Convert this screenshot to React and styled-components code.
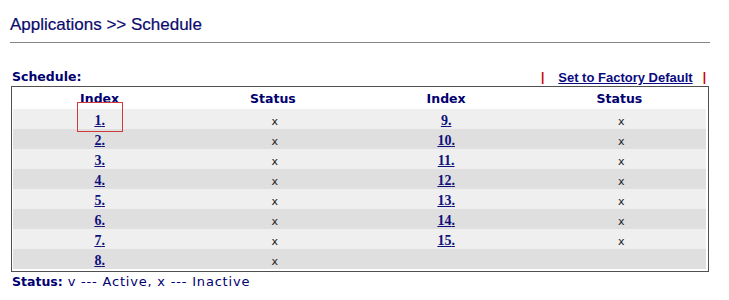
import React from "react";
import styled, { createGlobalStyle } from "styled-components";

const Global = createGlobalStyle`
  html, body { margin: 0; padding: 0; background: #ffffff; }
  body { font-family: "DejaVu Sans", Verdana, sans-serif; }
`;

const Page = styled.div`
  position: relative;
  width: 700px;
  padding: 0 0 0 10px;
`;

const Title = styled.div`
  font-family: "Liberation Sans", Arial, sans-serif;
  font-size: 17px;
  color: #0a0a6e;
  height: 42px;
  line-height: 50px;
  box-sizing: border-box;
  -webkit-text-stroke: 0.2px #0a0a6e;
`;

const Rule = styled.div`
  height: 0;
  border-top: 1px solid #858585;
`;

const Toolbar = styled.div`
  display: flex;
  justify-content: space-between;
  align-items: flex-end;
  margin-top: 24px;
  height: 19px;
  padding-left: 2px;
`;

const Label = styled.span`
  font-family: "DejaVu Sans", Verdana, sans-serif;
  font-weight: bold;
  font-size: 12.5px;
  color: #000070;
  line-height: 19px;
`;

const Actions = styled.div`
  display: flex;
  align-items: center;
  gap: 13px;
  line-height: 17px;
  padding-right: 4px;
`;

const Pipe = styled.span`
  color: #cc0000;
  font-family: "Liberation Sans", Arial, sans-serif;
  font-weight: bold;
  font-size: 12px;
`;

const ActionLink = styled.a`
  font-family: "Liberation Sans", Arial, sans-serif;
  font-weight: bold;
  font-size: 13px;
  color: #0a0a80;
  text-decoration: underline;
  cursor: pointer;
  margin-right: -3px;
  margin-left: 1px;
`;

const Frame = styled.div`
  margin-left: 1px;
  width: 698px;
  box-sizing: border-box;
  border: 1px solid #505050;
  padding: 1px 2px 2px 1px;
`;

const Table = styled.table`
  width: 100%;
  border-collapse: collapse;
  table-layout: fixed;
`;

const HeadCell = styled.th`
  font-family: "DejaVu Sans", Verdana, sans-serif;
  font-weight: bold;
  font-size: 12.5px;
  color: #000070;
  height: 21px;
  padding: 0;
  text-align: center;
  vertical-align: middle;
`;

const Row = styled.tr`
  background: ${(p) => (p.$alt ? "#dfdfdf" : "#efefef")};
  height: 20px;
`;

const Cell = styled.td`
  padding: 0;
  text-align: center;
  vertical-align: middle;
  height: 20px;
`;

const IndexLink = styled.a`
  font-family: "Liberation Serif", "Times New Roman", serif;
  font-weight: bold;
  font-size: 14px;
  color: #10107a;
  text-decoration: underline;
  cursor: pointer;
`;

const Mark = styled.span`
  font-family: "DejaVu Sans", Verdana, sans-serif;
  font-size: 11px;
  color: #202020;
  padding-left: 4px;
`;

const Legend = styled.div`
  font-family: "DejaVu Sans", Verdana, sans-serif;
  font-size: 13px;
  color: #000070;
  padding-left: 2px;
  margin-top: 2px;
  line-height: 16px;
  letter-spacing: 0.8px;
`;

const LegendKey = styled.b`
  font-weight: bold;
  font-size: 12.5px;
  letter-spacing: 0;
`;

const Annotation = styled.div`
  position: absolute;
  left: 77px;
  top: 102px;
  width: 46px;
  height: 30px;
  box-sizing: border-box;
  border: 1px solid #d03a3a;
  pointer-events: none;
`;

const rows = Array.from({ length: 8 }, (_, i) => ({
  a: i + 1,
  b: i + 9 <= 15 ? i + 9 : null,
}));

export default function App() {
  return (
    <>
      <Global />
      <Page>
        <Title>Applications &gt;&gt; Schedule</Title>
        <Rule />
        <Toolbar>
          <Label>Schedule:</Label>
          <Actions>
            <Pipe>|</Pipe>
            <ActionLink>Set to Factory Default</ActionLink>
            <Pipe>|</Pipe>
          </Actions>
        </Toolbar>
        <Frame>
          <Table>
            <thead>
              <tr>
                <HeadCell>Index</HeadCell>
                <HeadCell>Status</HeadCell>
                <HeadCell>Index</HeadCell>
                <HeadCell>Status</HeadCell>
              </tr>
            </thead>
            <tbody>
              {rows.map((r, i) => (
                <Row key={r.a} $alt={i % 2 === 1}>
                  <Cell>
                    <IndexLink>{r.a}.</IndexLink>
                  </Cell>
                  <Cell>
                    <Mark>x</Mark>
                  </Cell>
                  <Cell>{r.b && <IndexLink>{r.b}.</IndexLink>}</Cell>
                  <Cell>{r.b && <Mark>x</Mark>}</Cell>
                </Row>
              ))}
            </tbody>
          </Table>
        </Frame>
        <Legend>
          <LegendKey>Status:</LegendKey> v --- Active, x --- Inactive
        </Legend>
        <Annotation />
      </Page>
    </>
  );
}
